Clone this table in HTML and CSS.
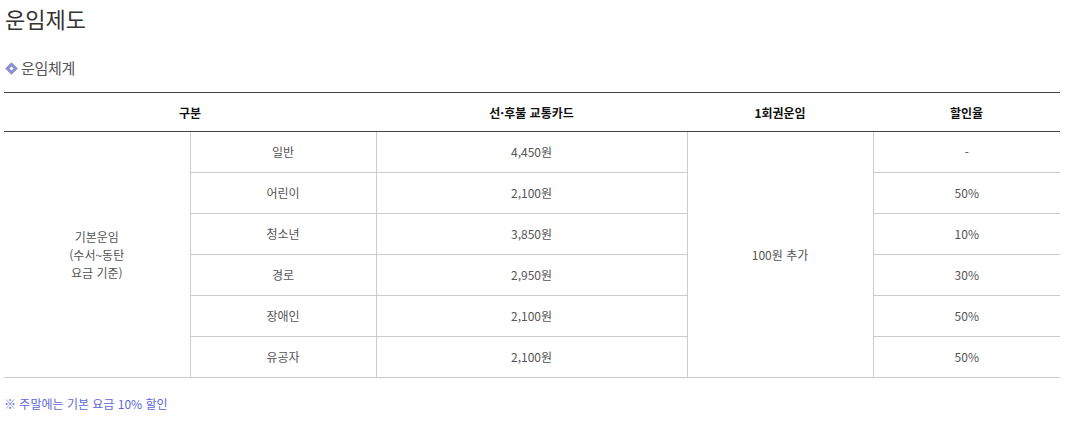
FILE: index.html
```html
<!DOCTYPE html>
<html lang="ko">
<head>
<meta charset="utf-8">
<title>운임제도</title>
<link rel="stylesheet" href="styles.css">
</head>
<body>
<div class="page">
  <h1 class="title">운임제도</h1>
  <h2 class="subtitle"><span class="bullet"></span>운임체계</h2>
  <table class="fare">
    <colgroup>
      <col class="c1"><col class="c2"><col class="c3"><col class="c4"><col class="c5">
    </colgroup>
    <thead>
      <tr>
        <th colspan="2">구분</th>
        <th>선·후불 교통카드</th>
        <th>1회권운임</th>
        <th>할인율</th>
      </tr>
    </thead>
    <tbody>
      <tr>
        <td rowspan="6" class="first">기본운임<br>(수서~동탄<br>요금 기준)</td>
        <td>일반</td>
        <td>4,450원</td>
        <td rowspan="6">100원 추가</td>
        <td class="last">-</td>
      </tr>
      <tr><td>어린이</td><td>2,100원</td><td class="last">50%</td></tr>
      <tr><td>청소년</td><td>3,850원</td><td class="last">10%</td></tr>
      <tr><td>경로</td><td>2,950원</td><td class="last">30%</td></tr>
      <tr><td>장애인</td><td>2,100원</td><td class="last">50%</td></tr>
      <tr><td>유공자</td><td>2,100원</td><td class="last">50%</td></tr>
    </tbody>
  </table>
  <p class="note">※ 주말에는 기본 요금 10% 할인</p>
</div>
</body>
</html>
```

FILE: styles.css
```css
html, body {
  margin: 0;
  padding: 0;
  background: #fff;
}
body {
  font-family: "Noto Sans CJK KR", "Noto Sans", sans-serif;
  color: #555;
}
.page {
  width: 1056px;
  padding: 0 0 0 4px;
}
.title {
  margin: 0;
  padding: 2px 0 0 1px;
  font-size: 22px;
  line-height: 32px;
  font-weight: 400;
  color: #333;
  letter-spacing: 0;
}
.subtitle {
  margin: 23px 0 0;
  font-size: 15px;
  line-height: 22px;
  font-weight: 400;
  color: #555;
  display: flex;
  align-items: center;
  gap: 5px;
  letter-spacing: -0.3px;
}
.bullet {
  width: 3px;
  height: 3px;
  border: 3px solid #8a90d2;
  background: #fff;
  transform: rotate(45deg);
  margin-left: 3px;
}
.fare {
  width: 1056px;
  margin-top: 13px;
  border-collapse: collapse;
  table-layout: fixed;
  border-top: 1px solid #444;
  border-bottom: 1px solid #ccc;
}
.c1 { width: 186px; }
.c2 { width: 186px; }
.c3 { width: 311px; }
.c4 { width: 186px; }
.c5 { width: 187px; }
.fare th {
  height: 38px;
  padding: 0;
  font-size: 12px;
  font-weight: 700;
  color: #111;
  border-bottom: 1px solid #444;
  text-align: center;
}
.fare td {
  height: 40px;
  padding: 0;
  font-size: 12px;
  line-height: 18px;
  text-align: center;
  color: #555;
  border: 1px solid #ccc;
}
.fare td.first { border-left: none; }
.fare td.last { border-right: none; }
.fare tbody tr:first-child td { border-top: none; }
.note {
  margin: 18px 0 0;
  font-size: 12px;
  line-height: 16px;
  color: #5e68dc;
}
```
